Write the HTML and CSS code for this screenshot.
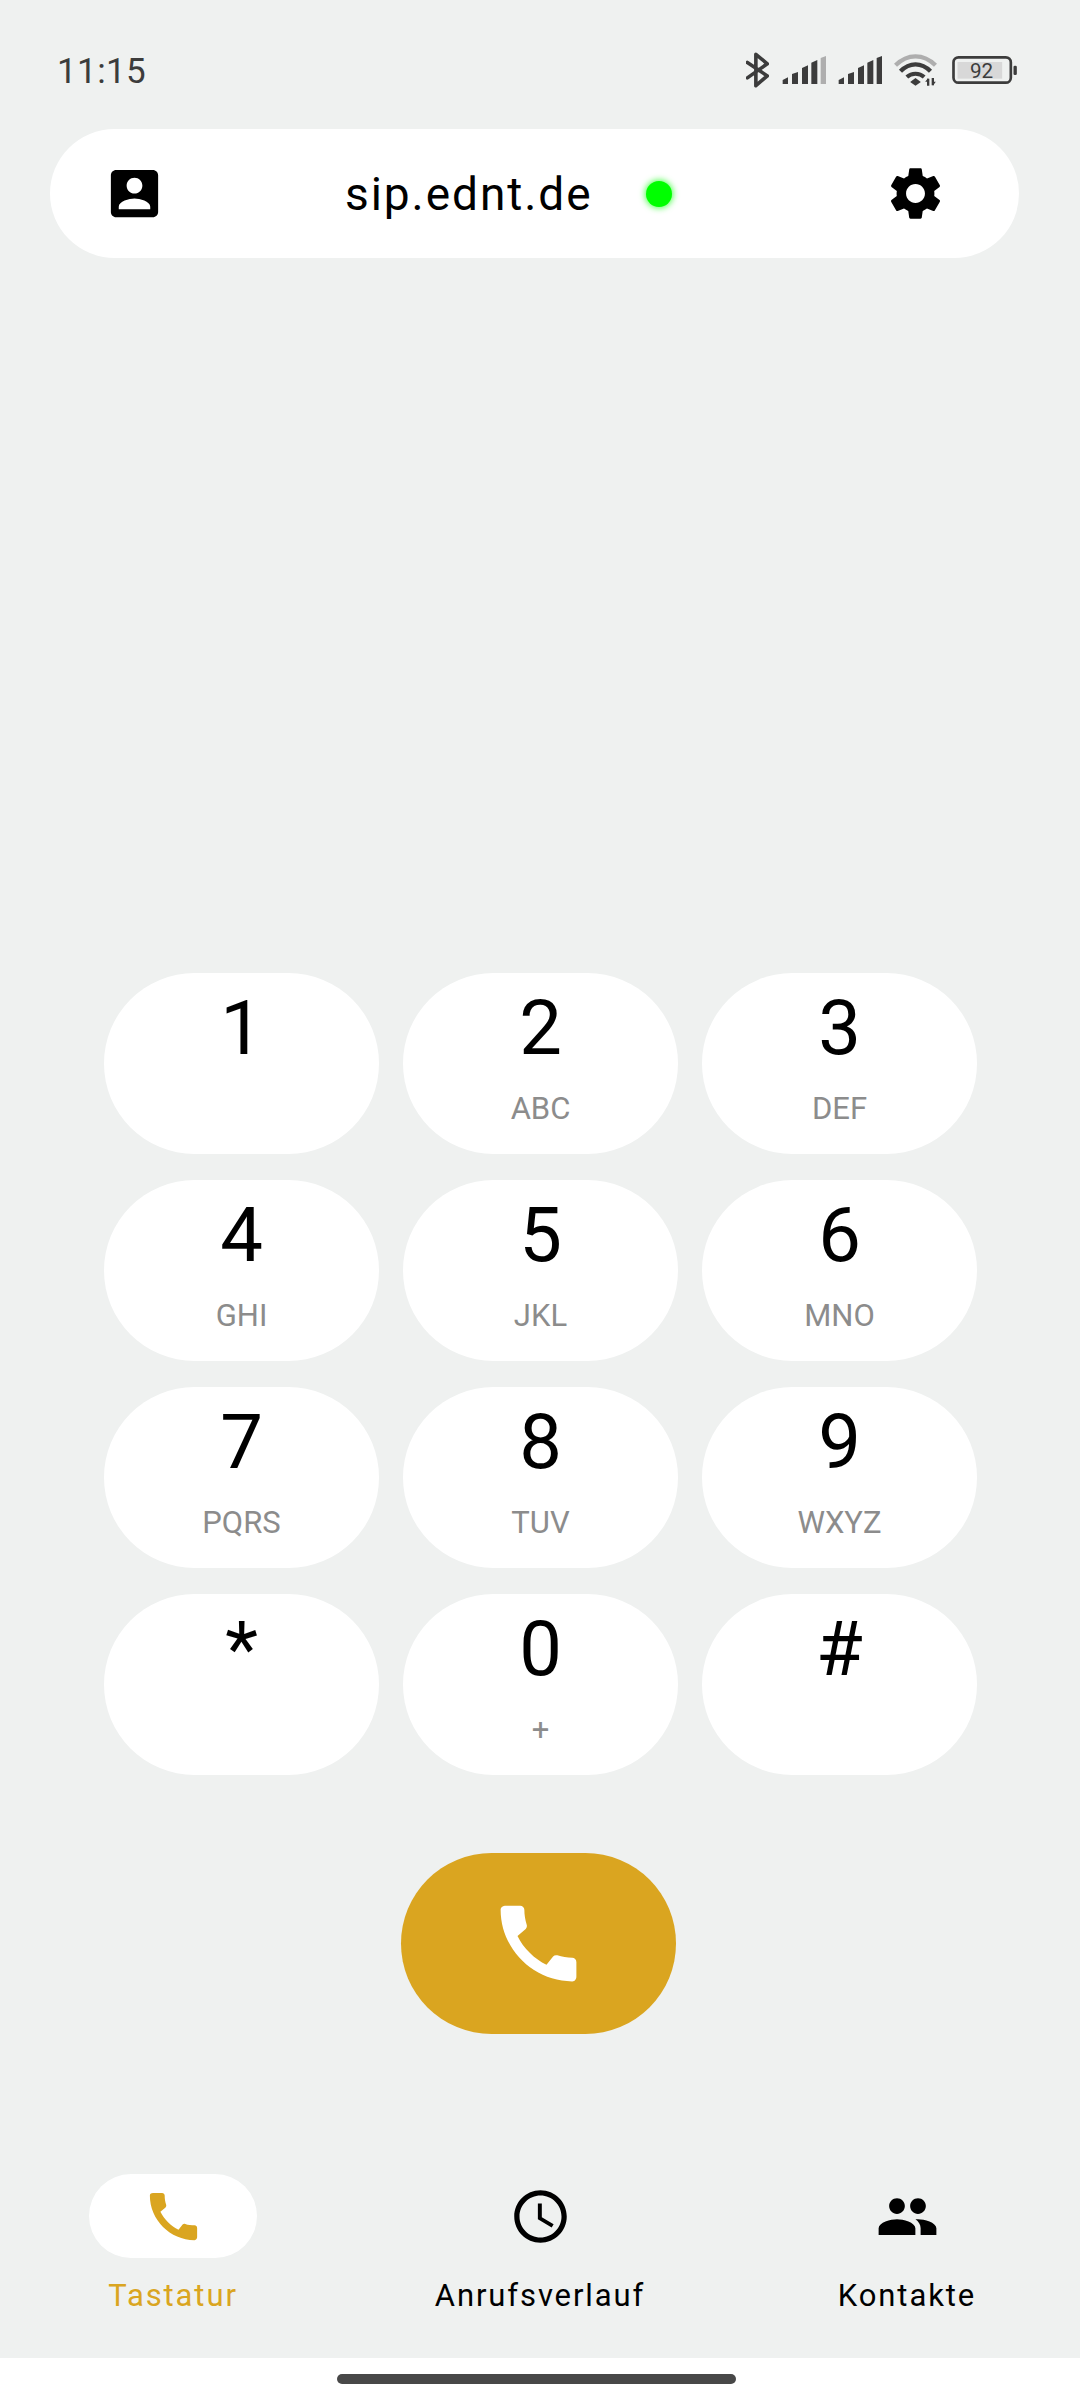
FILE: index.html
```html
<!DOCTYPE html>
<html lang="de">
  <head>
    <meta charset="UTF-8" />
    <meta name="viewport" content="width=device-width, initial-scale=1.0" />
    <title>Tastatur</title>
    <link rel="stylesheet" href="styles.css">
  </head>
  <body>
    <div class="app">
      <div class="status-bar">
        <span class="status-time">11:15</span>
        <div class="status-icons">
          <svg class="ic-bt" viewBox="78 33 70 110"><path d="M82 65L143 106L108 136V40L143 69L82 112" fill="none" stroke="#3c3c3c" stroke-width="11" stroke-linejoin="round" stroke-linecap="round"/></svg>
          <svg class="ic-signal" viewBox="186 48 132 84">
            <path d="M188 132V120L204 112V132Z" fill="#3c3c3c"/>
            <path d="M216 132V102L234 96V132Z" fill="#3c3c3c"/>
            <path d="M246 132V84L264 76V132Z" fill="#3c3c3c"/>
            <path d="M274 132V68L292 60V132Z" fill="#3c3c3c"/>
            <path d="M302 132V54L318 48V132Z" fill="#aeaeae"/>
          </svg>
          <svg class="ic-signal" viewBox="186 48 132 84">
            <path d="M188 132V120L204 112V132Z" fill="#3c3c3c"/>
            <path d="M216 132V102L234 96V132Z" fill="#3c3c3c"/>
            <path d="M246 132V84L264 76V132Z" fill="#3c3c3c"/>
            <path d="M274 132V68L292 60V132Z" fill="#3c3c3c"/>
            <path d="M302 132V54L318 48V132Z" fill="#3c3c3c"/>
          </svg>
          <svg class="ic-wifi" viewBox="524 42 128 96">
            <path d="M528 76C564 40 612 40 648 76" fill="none" stroke="#aeaeae" stroke-width="13"/>
            <path d="M543 94C570 66 606 66 633 94" fill="none" stroke="#3c3c3c" stroke-width="13"/>
            <path d="M562 111C576 98 600 98 614 111" fill="none" stroke="#3c3c3c" stroke-width="12"/>
            <path d="M588 114L604 126L588 137L572 126Z" fill="#3c3c3c"/>
            <path d="M626 116V137M640 114V136" stroke="#3c3c3c" stroke-width="7"/>
            <path d="M617 125L626 114V125ZM649 125L640 137V125Z" fill="#3c3c3c"/>
          </svg>
          <svg class="ic-battery" viewBox="696 46 194 84">
            <rect x="700" y="50" width="172" height="76" rx="15" fill="none" stroke="#3c3c3c" stroke-width="8"/>
            <rect x="712" y="64" width="134" height="50" fill="#d8d8d8"/>
            <rect x="880" y="75" width="10" height="28" rx="4" fill="#3c3c3c"/>
            <text class="battery-text" x="784" y="113" text-anchor="middle">92</text>
          </svg>
        </div>
      </div>

      <div class="top-bar">
        <svg class="icon" viewBox="0 0 24 24"><path d="M3 5v14c0 1.1.89 2 2 2h14c1.1 0 2-.9 2-2V5c0-1.1-.9-2-2-2H5c-1.11 0-2 .9-2 2zm12 4c0 1.66-1.34 3-3 3s-3-1.34-3-3 1.34-3 3-3 3 1.34 3 3zm-9 8c0-2 4-3.1 6-3.1s6 1.1 6 3.1v1H6v-1z"/></svg>
        <span class="server-name">sip.ednt.de</span>
        <span class="online-dot"></span>
        <svg class="icon settings" viewBox="0 0 24 24"><path d="M19.14 12.94c.04-.3.06-.61.06-.94 0-.32-.02-.64-.07-.94l2.03-1.58c.18-.14.23-.41.12-.61l-1.92-3.32c-.12-.22-.37-.29-.59-.22l-2.39.96c-.5-.38-1.03-.7-1.62-.94l-.36-2.54c-.04-.24-.24-.41-.48-.41h-3.84c-.24 0-.43.17-.47.41l-.36 2.54c-.59.24-1.13.57-1.62.94l-2.39-.96c-.22-.08-.47 0-.59.22L2.74 8.87c-.12.21-.08.47.12.61l2.03 1.58c-.05.3-.09.63-.09.94s.02.64.07.94l-2.03 1.58c-.18.14-.23.41-.12.61l1.92 3.32c.12.22.37.29.59.22l2.39-.96c.5.38 1.03.7 1.62.94l.36 2.54c.05.24.24.41.48.41h3.84c.24 0 .44-.17.47-.41l.36-2.54c.59-.24 1.13-.56 1.62-.94l2.39.96c.22.08.47 0 .59-.22l1.92-3.32c.12-.22.07-.47-.12-.61l-2.01-1.58zM12 15.6c-1.98 0-3.6-1.62-3.6-3.6s1.62-3.6 3.6-3.6 3.6 1.62 3.6 3.6-1.62 3.6-3.6 3.6z"/></svg>
      </div>

      <div class="keypad">
        <button class="key"><span class="digit">1</span><span class="letters"></span></button>
        <button class="key"><span class="digit">2</span><span class="letters">ABC</span></button>
        <button class="key"><span class="digit">3</span><span class="letters">DEF</span></button>
        <button class="key"><span class="digit">4</span><span class="letters">GHI</span></button>
        <button class="key"><span class="digit">5</span><span class="letters">JKL</span></button>
        <button class="key"><span class="digit">6</span><span class="letters">MNO</span></button>
        <button class="key"><span class="digit">7</span><span class="letters">PQRS</span></button>
        <button class="key"><span class="digit">8</span><span class="letters">TUV</span></button>
        <button class="key"><span class="digit">9</span><span class="letters">WXYZ</span></button>
        <button class="key"><span class="digit">*</span><span class="letters"></span></button>
        <button class="key"><span class="digit">0</span><span class="letters">+</span></button>
        <button class="key"><span class="digit">#</span><span class="letters"></span></button>
      </div>

      <button class="call-btn">
        <svg class="call-icon" viewBox="0 0 24 24"><path d="M20.01 15.38c-1.23 0-2.42-.2-3.53-.56-.35-.12-.74-.03-1.01.24l-1.57 1.97c-2.83-1.35-5.48-3.9-6.89-6.83l1.95-1.66c.27-.28.35-.67.24-1.02-.37-1.11-.56-2.3-.56-3.53 0-.54-.45-.99-.99-.99H4.19C3.65 3 3 3.24 3 3.99 3 13.28 10.73 21 20.01 21c.71 0 .99-.63.99-1.18v-3.45c0-.54-.45-.99-.99-.99z"/></svg>
      </button>

      <div class="nav-bar">
        <div class="nav-item active">
          <div class="nav-pill">
            <svg class="icon" viewBox="0 0 24 24"><path d="M20.01 15.38c-1.23 0-2.42-.2-3.53-.56-.35-.12-.74-.03-1.01.24l-1.57 1.97c-2.83-1.35-5.48-3.9-6.89-6.83l1.95-1.66c.27-.28.35-.67.24-1.02-.37-1.11-.56-2.3-.56-3.53 0-.54-.45-.99-.99-.99H4.19C3.65 3 3 3.24 3 3.99 3 13.28 10.73 21 20.01 21c.71 0 .99-.63.99-1.18v-3.45c0-.54-.45-.99-.99-.99z"/></svg>
          </div>
          <span class="nav-label">Tastatur</span>
        </div>
        <div class="nav-item">
          <div class="nav-pill">
            <svg class="icon" viewBox="0 0 24 24"><path d="M11.99 2C6.47 2 2 6.48 2 12s4.47 10 9.99 10C17.52 22 22 17.52 22 12S17.52 2 11.99 2zM12 20c-4.42 0-8-3.58-8-8s3.58-8 8-8 8 3.58 8 8-3.58 8-8 8zm.5-13H11v6l5.25 3.15.75-1.23-4.5-2.67z"/></svg>
          </div>
          <span class="nav-label">Anrufsverlauf</span>
        </div>
        <div class="nav-item">
          <div class="nav-pill">
            <svg class="icon" viewBox="0 0 24 24"><path d="M16 11c1.66 0 2.99-1.34 2.99-3S17.66 5 16 5c-1.66 0-3 1.34-3 3s1.34 3 3 3zm-8 0c1.66 0 2.99-1.34 2.99-3S9.66 5 8 5C6.34 5 5 6.34 5 8s1.34 3 3 3zm0 2c-2.33 0-7 1.17-7 3.5V19h14v-2.5c0-2.33-4.67-3.5-7-3.5zm8 0c-.29 0-.62.02-.97.05 1.16.84 1.97 1.97 1.97 3.45V19h6v-2.5c0-2.33-4.67-3.5-7-3.5z"/></svg>
          </div>
          <span class="nav-label">Kontakte</span>
        </div>
      </div>

      <div class="home-area">
        <div class="home-bar"></div>
      </div>
    </div>
  </body>
</html>
```

FILE: styles.css
```css
* {
  box-sizing: border-box;
}

body {
  margin: 0;
  font-family: Roboto, "Liberation Sans", sans-serif;
  background-color: #eff1f0;
  color: #000;
}

.app {
  display: flex;
  flex-direction: column;
  width: 1080px;
  height: 2400px;
  overflow: hidden;
}

button {
  font-family: inherit;
  border: none;
  padding: 0;
  color: inherit;
}

.status-bar {
  display: flex;
  justify-content: space-between;
  align-items: flex-start;
  height: 129px;
  padding: 50px 63px 0 57px;
}

.status-time {
  margin-top: 2px;
  font-size: 35px;
  line-height: 40px;
  letter-spacing: 0.4px;
  color: #3c3c3c;
}

.status-icons {
  display: flex;
  align-items: center;
  gap: 13px;
  height: 40px;
}

.ic-bt {
  width: 23px;
  height: 36px;
}

.ic-signal {
  width: 44px;
  height: 28px;
  margin-right: -1px;
}

.ic-wifi {
  width: 43px;
  height: 32px;
}

.ic-battery {
  width: 65px;
  height: 28px;
  margin-left: 2px;
}

.battery-text {
  font-family: Roboto, sans-serif;
  font-size: 62px;
  fill: #3c3c3c;
}

.top-bar {
  display: flex;
  align-items: center;
  width: 969px;
  height: 129px;
  margin-left: 50px;
  padding: 0 72px 0 53px;
  background-color: white;
  border-radius: 65px;
}

.icon {
  display: block;
  width: 63px;
  height: 63px;
  fill: #000;
}

.server-name {
  margin-left: 179px;
  font-size: 46px;
  letter-spacing: 1.95px;
  line-height: 60px;
}

.online-dot {
  width: 26px;
  height: 26px;
  margin-left: 53px;
  background-color: #00ff00;
  border-radius: 50%;
  box-shadow: 0 0 6px 1px rgba(0, 255, 0, 0.7);
}

.settings {
  margin-left: auto;
}

.keypad {
  display: grid;
  grid-template-columns: repeat(3, 275px);
  grid-auto-rows: 181px;
  gap: 26px 24px;
  margin: 715px 0 0 104px;
}

.key {
  display: flex;
  flex-direction: column;
  align-items: center;
  padding-top: 10px;
  background-color: white;
  border-radius: 91px;
}

.digit {
  font-size: 76px;
  line-height: 90px;
}

.letters {
  margin-top: 18px;
  font-size: 31px;
  line-height: 36px;
  color: #8c8c8c;
}

.call-btn {
  display: flex;
  justify-content: center;
  align-items: center;
  width: 275px;
  height: 181px;
  margin: 78px 0 0 401px;
  background-color: #daa520;
  border-radius: 91px;
}

.call-icon {
  width: 101px;
  height: 101px;
  fill: white;
}

.nav-bar {
  display: grid;
  grid-template-columns: repeat(3, 336px);
  gap: 31px;
  height: 184px;
  margin-top: 140px;
  padding-left: 5px;
}

.nav-item {
  display: flex;
  flex-direction: column;
  align-items: center;
}

.nav-pill {
  display: flex;
  justify-content: center;
  align-items: center;
  width: 168px;
  height: 84px;
  border-radius: 42px;
}

.nav-label {
  margin-top: 18px;
  font-size: 31px;
  line-height: 40px;
  letter-spacing: 1.9px;
}

.nav-item.active .nav-pill {
  background-color: white;
}

.nav-item.active .icon {
  fill: #daa520;
}

.nav-item.active .nav-label {
  color: #daa520;
}

.home-area {
  flex: 1;
  padding-top: 16px;
  background-color: white;
}

.home-bar {
  width: 399px;
  height: 10px;
  margin-left: 337px;
  background-color: #484848;
  border-radius: 5px;
}
```
